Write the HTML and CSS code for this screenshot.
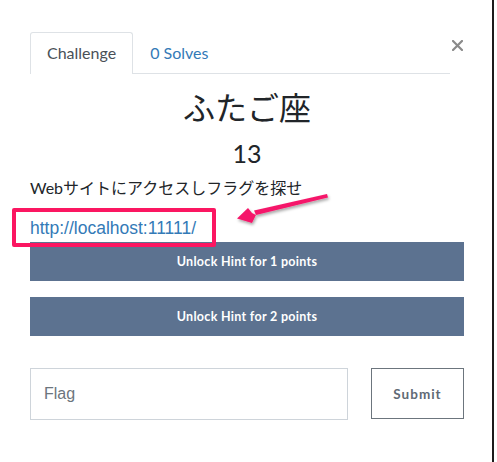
FILE: index.html
```html
<!DOCTYPE html>
<html lang="ja">
<head>
    <meta charset="UTF-8">
    <meta name="viewport" content="width=device-width, initial-scale=1.0">
    <title>ふたご座</title>
    <link rel="stylesheet" href="styles.css">
</head>
<body>

<div class="frame">
    <div class="modal">
        <div class="modal-head">
            <ul class="tabs">
                <li class="tab active">Challenge</li>
                <li class="tab">0 Solves</li>
            </ul>
            <button class="close" type="button" aria-label="Close">
                <svg width="11" height="11" viewBox="0 0 11 11">
                    <path d="M1 1 L10 10 M10 1 L1 10" stroke="#8a8a8a" stroke-width="2.2" stroke-linecap="square"/>
                </svg>
            </button>
        </div>

        <h2 class="chal-name">ふたご座</h2>
        <h3 class="chal-value">13</h3>
        <p class="chal-desc">Webサイトにアクセスしフラグを探せ</p>
        <p class="chal-link"><a href="#">http://localhost:11111/</a></p>

        <button class="hint" type="button">Unlock Hint for 1 points</button>
        <button class="hint" type="button">Unlock Hint for 2 points</button>

        <form class="flag-form">
            <input type="text" class="flag-input" placeholder="Flag">
            <button type="button" class="submit">Submit</button>
        </form>
    </div>

    <!-- annotation drawn over the screenshot -->
    <div class="mark-box"></div>
    <svg class="mark-arrow" width="497" height="462" viewBox="0 0 497 462">
        <defs>
            <filter id="shade" x="-20%" y="-50%" width="140%" height="200%">
                <feDropShadow dx="1" dy="2" stdDeviation="1.6" flood-color="#000" flood-opacity="0.35"/>
            </filter>
        </defs>
        <g filter="url(#shade)" fill="#f5186a">
            <path d="M327 194 L328 197.5 L256 215 L254 210.5 Z"/>
            <path d="M237 218.5 L248 208 L252 213 L256 215 L252 223 Z"/>
        </g>
    </svg>
</div>

</body>
</html>
```

FILE: styles.css
```css
body {
    margin: 0;
    background: #fff;
    font-family: 'Lato', 'Noto Sans CJK JP', sans-serif;
    color: #212529;
}
.frame {
    position: relative;
    width: 492px;
    height: 462px;
    border-right: 2px solid #1c1c1c;
}
.modal {
    padding: 32px 0 0 30px;
    width: 434px;
}
.modal-head {
    display: flex;
    align-items: flex-start;
}
.tabs {
    flex: 1;
    display: flex;
    margin: 0;
    padding: 0;
    list-style: none;
    border-bottom: 1px solid #dee2e6;
    height: 41px;
}
.tab {
    padding: 0 16px;
    height: 40px;
    line-height: 40px;
    font-size: 16px;
    color: #337ab7;
    border: 1px solid transparent;
    border-bottom: none;
}
.tab.active {
    color: #495057;
    border-color: #dee2e6;
    border-radius: 3px 3px 0 0;
    background: #fff;
    height: 41px;
}
.close {
    width: 14px;
    padding: 7px 0 0 1px;
    border: none;
    background: none;
    cursor: pointer;
}
.chal-name {
    margin: 12px 0 0;
    text-align: center;
    font-size: 32px;
    font-weight: 400;
    line-height: 40px;
    font-family: 'Noto Sans CJK JP', sans-serif;
}
.chal-value {
    margin: 12px 0 0;
    text-align: center;
    font-size: 25px;
    font-weight: 400;
    line-height: 30px;
}
.chal-desc {
    margin: 8px 0 0;
    font-size: 16px;
    line-height: 24px;
}
.chal-link {
    margin: 17px 0 0;
    font-size: 17.5px;
    line-height: 22px;
    font-family: 'Liberation Sans', sans-serif;
}
.chal-link a {
    color: #337ab7;
    text-decoration: none;
}
.hint {
    display: block;
    width: 100%;
    height: 39px;
    margin: 3px 0 0;
    border: none;
    background: #5c7290;
    color: #fff;
    font-family: 'Lato', sans-serif;
    font-size: 12.5px;
    font-weight: bold;
    letter-spacing: 0.3px;
    cursor: pointer;
}
.hint + .hint {
    margin-top: 16px;
}
.flag-form {
    display: flex;
    gap: 23px;
    margin-top: 32px;
}
.flag-input {
    flex: 1;
    height: 52px;
    box-sizing: border-box;
    padding: 0 13px;
    border: 1px solid #ced4da;
    font-family: 'Liberation Sans', sans-serif;
    font-size: 16px;
    color: #495057;
}
.flag-input::placeholder {
    color: #6c757d;
}
.submit {
    width: 93px;
    height: 51px;
    box-sizing: border-box;
    border: 1px solid #6c757d;
    background: #fff;
    color: #5f6a75;
    font-family: 'Lato', sans-serif;
    font-size: 13.5px;
    font-weight: bold;
    letter-spacing: 1px;
    cursor: pointer;
}
.mark-box {
    position: absolute;
    left: 12px;
    top: 208px;
    width: 196px;
    height: 31px;
    border: 4px solid #fb1661;
    border-radius: 2px;
}
.mark-arrow {
    position: absolute;
    left: 0;
    top: 0;
    pointer-events: none;
}
```
